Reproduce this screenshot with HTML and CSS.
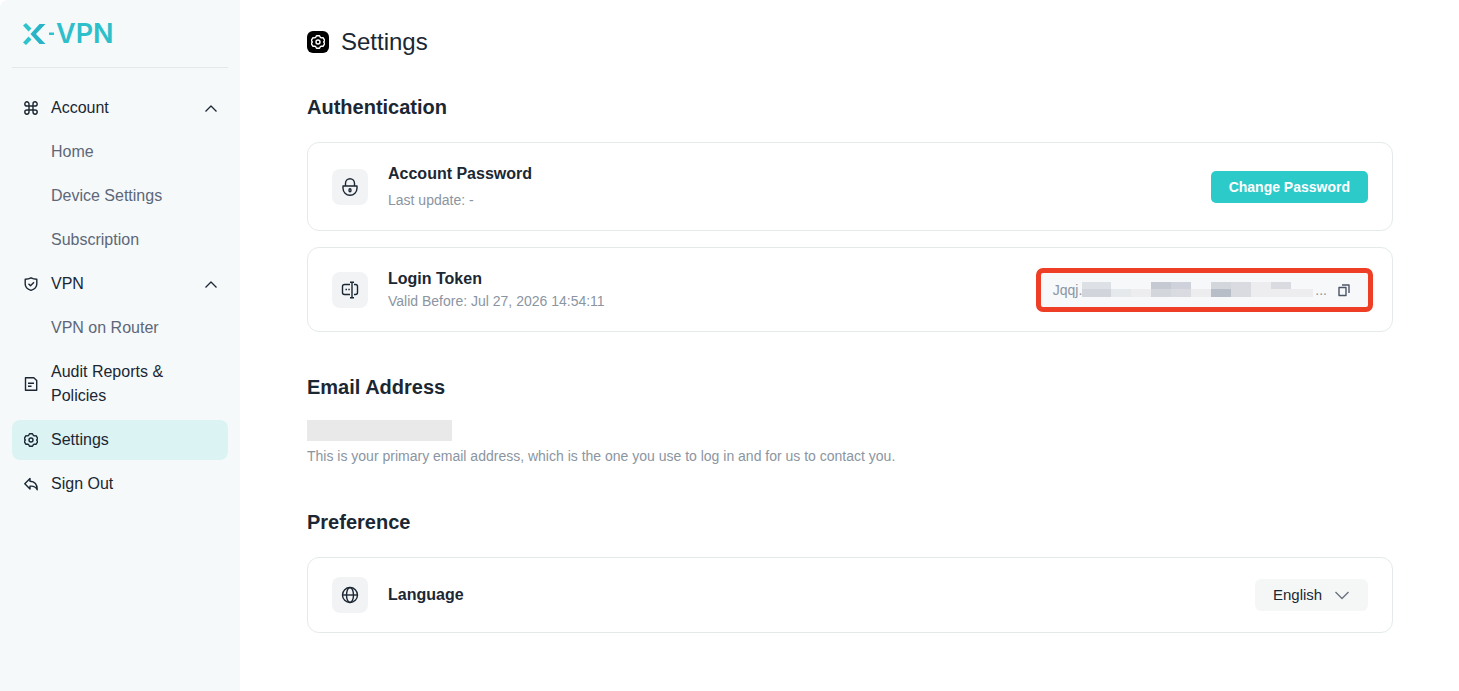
FILE: index.html
```html
<!DOCTYPE html>
<html lang="en">

<head>
    <meta charset="UTF-8">
    <meta name="viewport" content="width=device-width, initial-scale=1.0">
    <title>X-VPN Settings</title>
    <link rel="stylesheet" href="styles.css">
</head>

<body>
    <!-- Shared icon shapes -->
    <svg class="sprite" aria-hidden="true">
        <symbol id="icon-gear" viewBox="1 1 14 14">
            <path d="M6.500 1.700h3l.8 1.600 1.100.6 1.800-.1 1.500 2.700-1 1.500 1 1.500-1.500 2.700-1.800-.1-1.100.6-.8 1.600h-3l-.8-1.600-1.100-.6-1.800.1-1.500-2.700 1-1.500-1-1.500 1.500-2.700 1.800.1 1.100-.6z" />
            <circle cx="8" cy="8" r="2" />
        </symbol>
        <symbol id="icon-up" viewBox="0 0 14 14">
            <path d="M1.500 10.500 7 5l5.500 5.500" />
        </symbol>
    </svg>

    <div class="layout">
        <aside class="sidebar">
            <a class="logo" href="#" aria-label="X-VPN">
                <svg class="logo-mark" viewBox="0 0 32 22" aria-hidden="true">
                    <path class="logo-light" d="M0 2.500 3 0l5.500 5.500-3 3zM5.500 13.500l3 3L3 22 0 19.500z" />
                    <path class="logo-dark" d="M16.500 1H22.500l-9.500 10 9.500 10h-6L7.500 11z" />
                    <path class="logo-light" d="M26 9.500h5v2.500h-5z" />
                </svg>
                <span class="logo-text">VPN</span>
            </a>

            <nav class="menu">
                <button class="menu-item" type="button" aria-expanded="true">
                    <svg class="icon" viewBox="1 1 14 14">
                        <path d="M6 6h4v4H6zM6 6H3.900A2.100 2.100 0 1 1 6 3.900zM10 6V3.900A2.100 2.100 0 1 1 12.100 6zM10 10h2.100a2.100 2.100 0 1 1-2.100 2.100zM6 10v2.100A2.100 2.100 0 1 1 3.900 10z" />
                    </svg>
                    <span class="menu-label">Account</span>
                    <svg class="arrow"><use href="#icon-up" /></svg>
                </button>
                <a class="menu-item sub" href="#">Home</a>
                <a class="menu-item sub" href="#">Device Settings</a>
                <a class="menu-item sub" href="#">Subscription</a>
                <button class="menu-item" type="button" aria-expanded="true">
                    <svg class="icon" viewBox="1 1 14 14">
                        <path d="M8 1.800c1.800 1 3.600 1.400 5.800 1.400V8c0 3.200-2.300 5.200-5.800 6.300C4.500 13.200 2.200 11.200 2.200 8V3.200C4.400 3.200 6.200 2.800 8 1.800zM5.500 7.800l2 2L11 6.300" />
                    </svg>
                    <span class="menu-label">VPN</span>
                    <svg class="arrow"><use href="#icon-up" /></svg>
                </button>
                <a class="menu-item sub" href="#">VPN on Router</a>
                <a class="menu-item" href="#">
                    <svg class="icon" viewBox="1 1 14 14">
                        <path d="M2.500 1.800h8.300l2.900 2.700v9.700H2.500zM5 7.200h6M5 10.200h3.500" />
                    </svg>
                    <span class="menu-label">Audit Reports &amp; Policies</span>
                </a>
                <a class="menu-item active" href="#" aria-current="page">
                    <svg class="icon"><use href="#icon-gear" /></svg>
                    <span class="menu-label">Settings</span>
                </a>
                <a class="menu-item" href="#">
                    <svg class="icon" viewBox="1 1 14 14">
                        <path d="M7 2.500 1.800 7.700 7 12.900V10.200c3.500-.4 5.800.8 7.200 3.600C14.300 9 12 5.500 7 5.200z" />
                    </svg>
                    <span class="menu-label">Sign Out</span>
                </a>
            </nav>
        </aside>

        <main class="content">
            <h1 class="page-title">
                <span class="title-icon">
                    <svg class="icon"><use href="#icon-gear" /></svg>
                </span>
                Settings
            </h1>

            <section class="section">
                <h2>Authentication</h2>
                <div class="card">
                    <span class="card-icon">
                        <svg class="icon" viewBox="0 0 18 18">
                            <path d="M2 8h14v2.200a7 7 0 0 1-14 0zM4.500 8V5.200a4.500 4.500 0 0 1 9 0V8" />
                            <ellipse cx="9" cy="12.300" rx="1" ry="1.500" />
                        </svg>
                    </span>
                    <div class="card-text spaced">
                        <h3>Account Password</h3>
                        <p class="hint">Last update: -</p>
                    </div>
                    <button class="primary" type="button">Change Password</button>
                </div>
                <div class="card">
                    <span class="card-icon">
                        <svg class="icon" viewBox="0 0 18 18">
                            <path d="M9 3.500H3.500a2 2 0 0 0-2 2v6a2 2 0 0 0 2 2H9M13 3.500h1.500a2 2 0 0 1 2 2v6a2 2 0 0 1-2 2H13M11 1.200v15.600M9 1.200h4M9 16.800h4M4.500 8.500h1.500M7.300 8.500h1.500" />
                        </svg>
                    </span>
                    <div class="card-text">
                        <h3>Login Token</h3>
                        <p class="hint">Valid Before: Jul 27, 2026 14:54:11</p>
                    </div>
                    <div class="token">
                        <span class="token-start">Jqqj.</span>
                        <svg class="mask" viewBox="0 0 231 15" aria-hidden="true">
                            <path fill="#dde0e5" d="M0 0h29v7H0z" />
                            <path fill="#c5c9d1" d="M69 0h20v7H69z" />
                            <path fill="#cfd2da" d="M89 0h20v7H89z" />
                            <path fill="#d3d6db" d="M129 0h20v7h-20zM69 7h20v8H69z" />
                            <path fill="#d9dbe1" d="M149 0h20v15h-20zM189 0h20v7h-20zM89 7h20v8H89z" />
                            <path fill="#d1d5db" d="M0 7h29v8H0z" />
                            <path fill="#e6e9ec" d="M29 7h20v8H29z" />
                            <path fill="#ededf0" d="M49 7h20v8H49zM109 7h20v8h-20zM169 0h20v15h-20zM189 7h42v8h-42z" />
                            <path fill="#b7bec8" d="M129 7h20v8h-20z" />
                        </svg>
                        <span class="token-end">...</span>
                        <button class="copy" type="button" aria-label="Copy login token">
                            <svg viewBox="0 0 14 14">
                                <path d="M2 4.500h7v8H2zM5 2h7v8" />
                            </svg>
                        </button>
                    </div>
                </div>
            </section>

            <section class="section">
                <h2>Email Address</h2>
                <div class="email-mask"></div>
                <p class="hint">This is your primary email address, which is the one you use to log in and for us to contact you.</p>
            </section>

            <section class="section">
                <h2>Preference</h2>
                <div class="card">
                    <span class="card-icon">
                        <svg class="icon" viewBox="0 0 18 18">
                            <circle cx="9" cy="9" r="7.500" />
                            <ellipse cx="9" cy="9" rx="3.500" ry="7.500" />
                            <path d="M1.500 9h15" />
                        </svg>
                    </span>
                    <label class="card-text" for="language">Language</label>
                    <div class="select">
                        <select id="language">
                            <option>English</option>
                        </select>
                        <svg class="select-arrow" viewBox="0 0 16 16" aria-hidden="true">
                            <path d="M1.500 5 8 11.500 14.500 5" />
                        </svg>
                    </div>
                </div>
            </section>
        </main>
    </div>
</body>

</html>
```
FILE: styles.css
```css
* {
    box-sizing: border-box;
}

body {
    margin: 0;
    background: #fff;
    color: #1b2733;
    font: 16px/24px "Liberation Sans", Arial, sans-serif;
}

h1,
h2,
h3,
p {
    margin: 0;
}

a {
    color: inherit;
    text-decoration: none;
}

button,
select {
    border: 0;
    background: none;
    color: inherit;
    font: inherit;
    cursor: pointer;
}

svg {
    display: block;
    fill: none;
    stroke: currentColor;
    stroke-linejoin: round;
}

.sprite {
    position: absolute;
    width: 0;
    height: 0;
}

.layout {
    display: flex;
    min-height: 100vh;
}

/* Sidebar */
.sidebar {
    flex: 0 0 240px;
    padding: 0 12px;
    background: #f5f9fa;
    border-top-left-radius: 8px;
}

.logo {
    display: flex;
    align-items: center;
    height: 68px;
    padding-left: 11px;
    border-bottom: 1px solid #e3e8ea;
}

.logo-mark {
    width: 32px;
    height: 22px;
    stroke: none;
}

.logo-light {
    fill: #2dc4cb;
}

.logo-dark {
    fill: #29b4c8;
}

.logo-text {
    padding-left: 1px;
    color: #2dbfca;
    font: 600 27px/32px Inter, sans-serif;
}

.menu {
    display: flex;
    flex-direction: column;
    gap: 4px;
    padding-top: 20px;
}

.menu-item {
    display: flex;
    align-items: center;
    width: 100%;
    min-height: 40px;
    padding: 8px 10px 8px 12px;
    border-radius: 8px;
    text-align: left;
}

.menu-item .icon {
    width: 14px;
    height: 14px;
}

.menu-label {
    flex: 1;
    padding-left: 13px;
}

.menu-item.sub {
    padding-left: 39px;
    color: #5d6778;
}

.menu-item.active {
    background: #dcf3f4;
}

.icon {
    flex: none;
    stroke-width: 1.4;
}

.arrow {
    width: 14px;
    height: 14px;
    stroke-width: 1.3;
}

/* Main content */
.content {
    flex: 1;
    min-width: 0;
    padding: 26px 66px 24px 67px;
}

.page-title {
    display: flex;
    align-items: center;
    gap: 12px;
    font-size: 24px;
    font-weight: normal;
    line-height: 32px;
}

.title-icon {
    display: grid;
    place-items: center;
    width: 22px;
    height: 22px;
    border-radius: 6px;
    background: #000;
    color: #fff;
}

.title-icon .icon {
    width: 14px;
    height: 14px;
}

.section {
    padding-top: 32px;
}

.section + .section {
    padding-top: 38px;
}

h2 {
    padding-bottom: 18px;
    font-size: 20px;
    line-height: 34px;
}

.card {
    display: flex;
    align-items: center;
    padding: 19px 24px;
    border: 1px solid #e4eaea;
    border-radius: 12px;
}

.card + .card {
    margin-top: 16px;
}

.card-icon {
    display: grid;
    place-items: center;
    width: 36px;
    height: 36px;
    border-radius: 8px;
    background: #f1f3f5;
}

.card-icon .icon {
    width: 18px;
    height: 18px;
}

.card-text {
    flex: 1;
    padding-left: 20px;
    font-weight: bold;
}

h3 {
    font-size: 16px;
    line-height: 24px;
}

.hint {
    color: #8b95a1;
    font-size: 14px;
    font-weight: normal;
    line-height: 21px;
}

.spaced .hint {
    padding-top: 4px;
}

.primary {
    height: 32px;
    padding: 0 18px;
    border-radius: 5px;
    background: #2dcaca;
    color: #fff;
    font-size: 14px;
    font-weight: bold;
}

.token {
    display: flex;
    align-items: center;
    height: 34px;
    padding: 0 17px 0 12px;
    border-radius: 2px;
    background: #f7f8fa;
    color: #8b95a1;
    font-size: 14px;
    outline: 5px solid #ee3e25;
}

.mask {
    width: 231px;
    height: 15px;
    stroke: none;
}

.token-end {
    padding: 0 10px 0 2px;
}

.copy {
    padding: 0;
    color: #4b5565;
}

.copy svg {
    width: 14px;
    height: 14px;
    stroke-width: 1.4;
}

.email-mask {
    width: 145px;
    height: 21px;
    margin: -2px 0 5px;
    background: #e9e9e9;
}

.select {
    display: grid;
    align-items: center;
    border-radius: 6px;
    background: #f5f7f7;
}

.select select,
.select-arrow {
    grid-area: 1 / 1;
}

.select select {
    height: 32px;
    padding: 0 45px 0 18px;
    appearance: none;
    font-size: 15px;
}

.select-arrow {
    justify-self: end;
    width: 16px;
    height: 16px;
    margin-right: 18px;
    color: #6b7280;
    stroke-width: 1.4;
    pointer-events: none;
}
```
